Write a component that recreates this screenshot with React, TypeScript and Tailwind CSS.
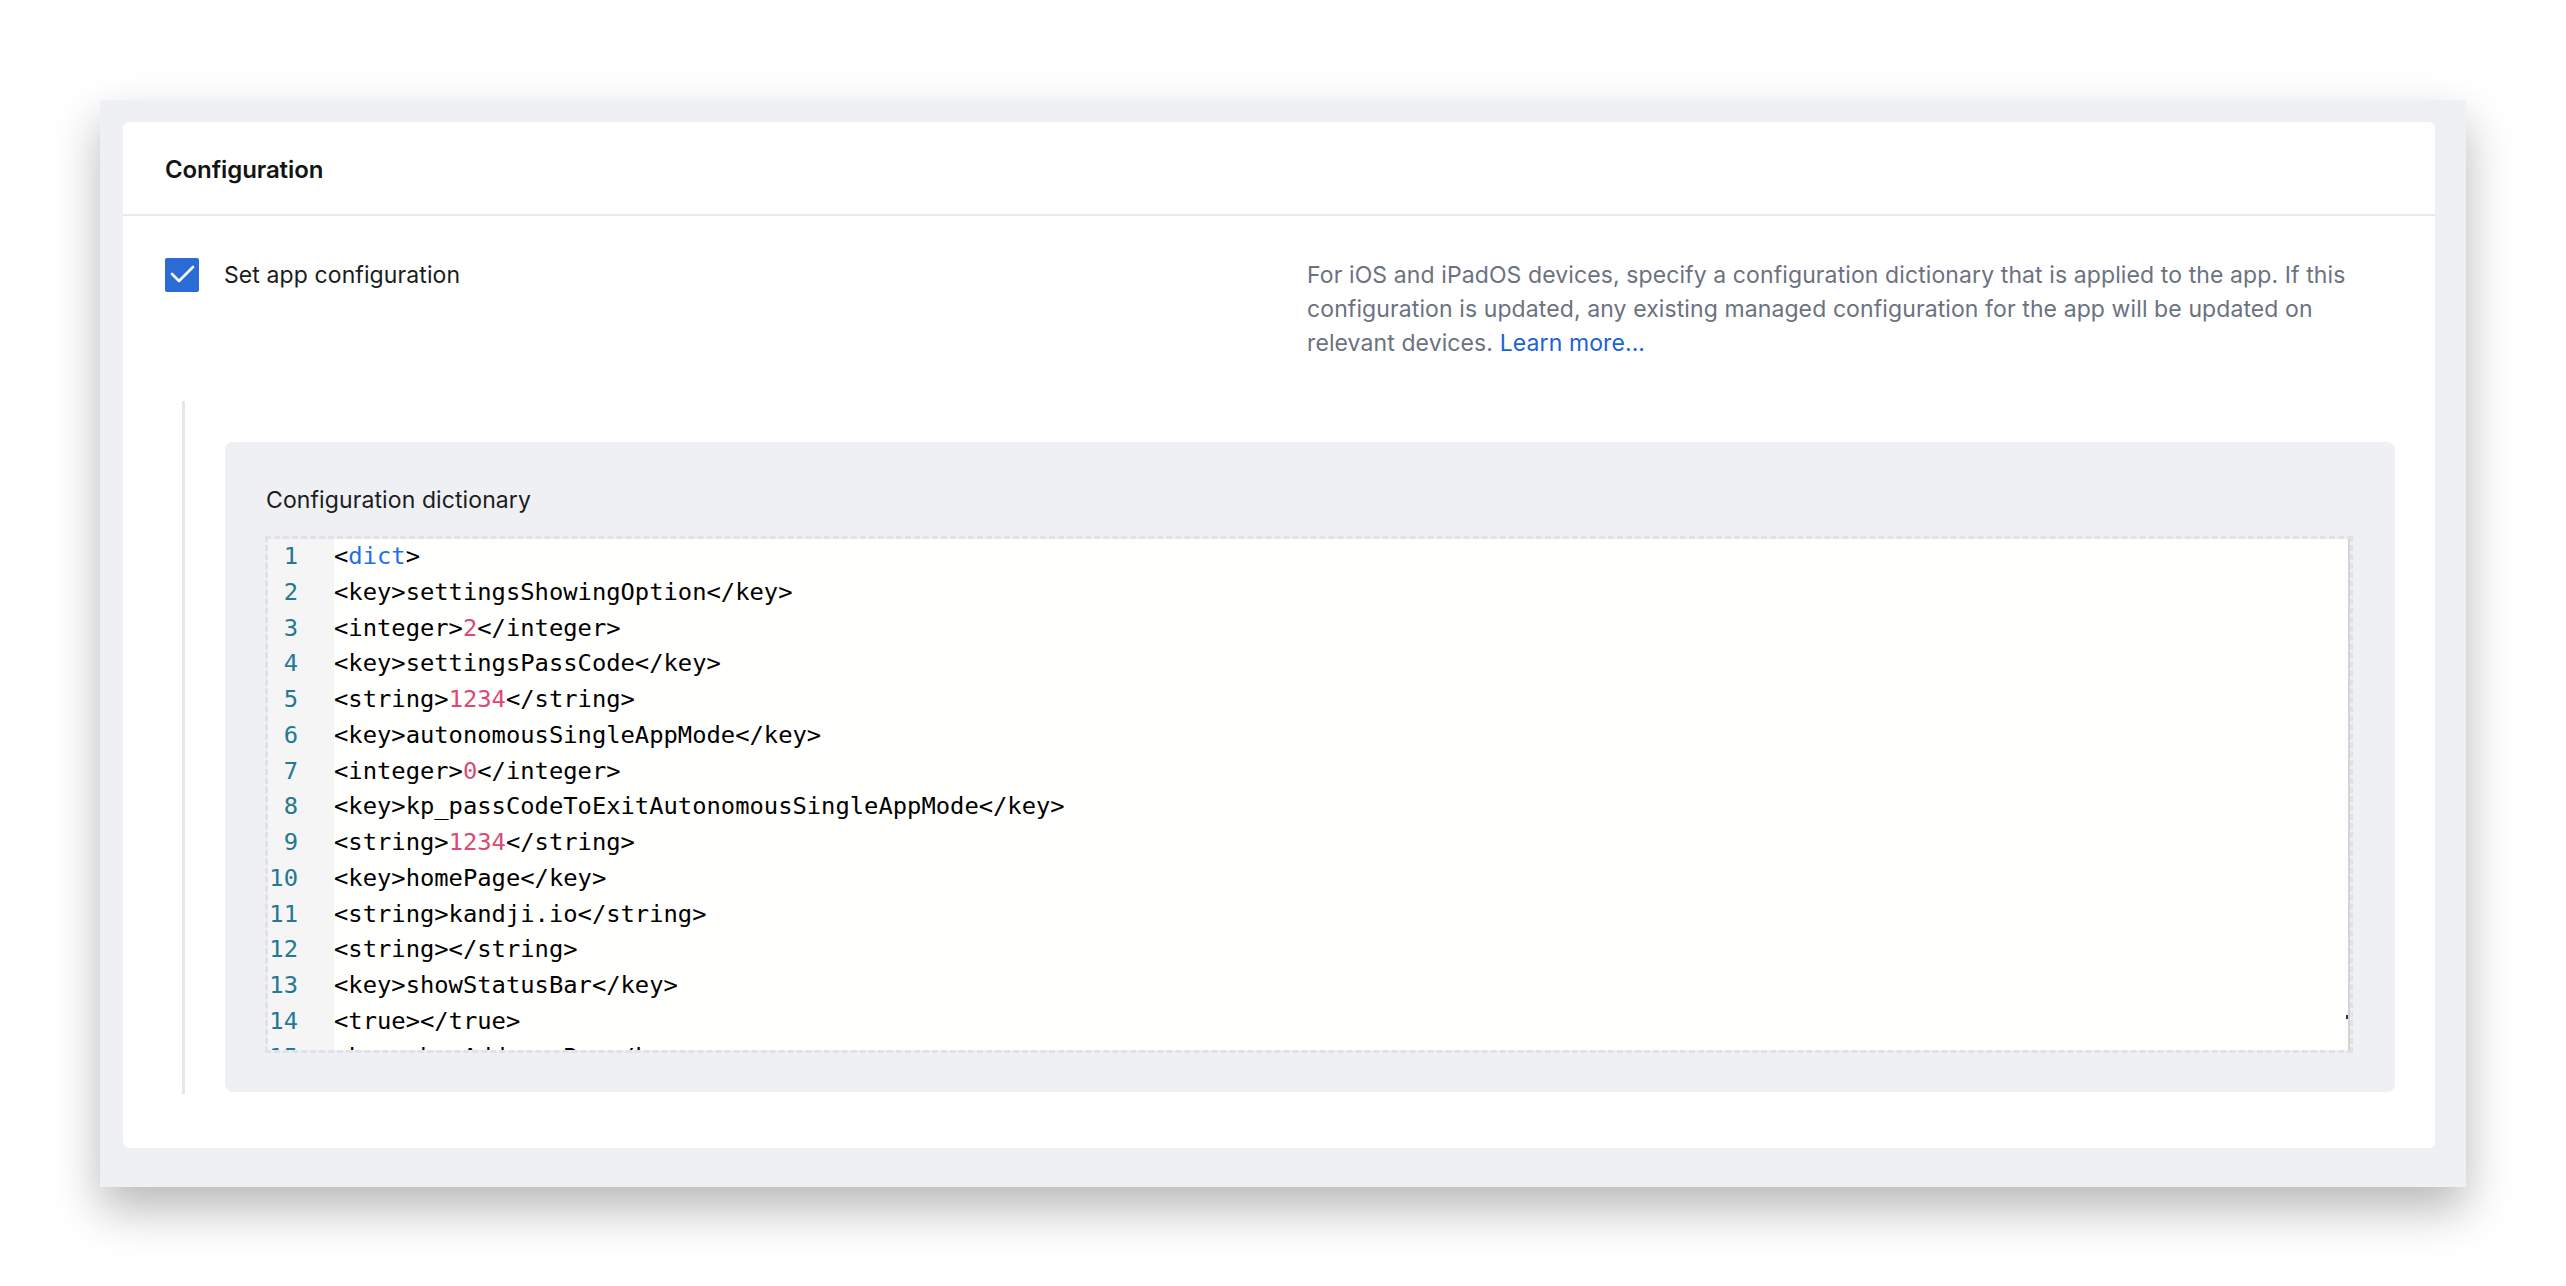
import React from "react";

const lines: React.ReactNode[] = [
  <>&lt;<span className="text-[#1f6fe6]">dict</span>&gt;</>,
  <>&lt;key&gt;settingsShowingOption&lt;/key&gt;</>,
  <>&lt;integer&gt;<span className="text-[#dc4a72]">2</span>&lt;/integer&gt;</>,
  <>&lt;key&gt;settingsPassCode&lt;/key&gt;</>,
  <>&lt;string&gt;<span className="text-[#dc4a72]">1234</span>&lt;/string&gt;</>,
  <>&lt;key&gt;autonomousSingleAppMode&lt;/key&gt;</>,
  <>&lt;integer&gt;<span className="text-[#dc4a72]">0</span>&lt;/integer&gt;</>,
  <>&lt;key&gt;kp_passCodeToExitAutonomousSingleAppMode&lt;/key&gt;</>,
  <>&lt;string&gt;<span className="text-[#dc4a72]">1234</span>&lt;/string&gt;</>,
  <>&lt;key&gt;homePage&lt;/key&gt;</>,
  <>&lt;string&gt;kandji.io&lt;/string&gt;</>,
  <>&lt;string&gt;&lt;/string&gt;</>,
  <>&lt;key&gt;showStatusBar&lt;/key&gt;</>,
  <>&lt;true&gt;&lt;/true&gt;</>,
  <>&lt;key&gt;showAddressBar&lt;/key&gt;</>,
];

export default function App() {
  return (
    <div className="min-h-[1286px] bg-white pt-[100px] px-[100px] font-['Inter',sans-serif]">
      <div className="bg-[#eef0f4] pt-[22px] pl-[23px] pr-[31px] pb-[39px] shadow-[0_22px_44px_rgba(0,0,0,0.28)]">
        <div className="bg-white rounded-[6px] pb-[54px]">
          {/* header */}
          <div className="h-[94px] flex items-center px-[42px] border-b-2 border-[#e8e9ee]">
            <h2 className="text-[24px] font-semibold text-[#141414] tracking-[-0.1px] pt-[4px]">Configuration</h2>
          </div>

          {/* body */}
          <div className="pt-[42px] px-[42px] flex items-start">
            <div className="w-[1142px] flex items-start">
              <div className="w-[34px] h-[34px] bg-[#2a6bd6] rounded-[2px] flex items-center justify-center">
                <svg width="34" height="34" viewBox="0 0 34 34">
                  <polyline points="7,16 14,23 28,9" fill="none" stroke="white" strokeWidth="2.6" strokeLinecap="round" strokeLinejoin="round" />
                </svg>
              </div>
              <span className="ml-[25px] text-[23px] tracking-[0.1px] leading-[34px] text-[#1c1c1c]">Set app configuration</span>
            </div>
            <p className="text-[23px] tracking-[0.1px] leading-[34px] text-[#6b7280]">
              <span className="block whitespace-nowrap">For iOS and iPadOS devices, specify a configuration dictionary that is applied to the app. If this</span>
              <span className="block whitespace-nowrap">configuration is updated, any existing managed configuration for the app will be updated on</span>
              <span className="block whitespace-nowrap">relevant devices. <span className="text-[#1a62d6]">Learn more...</span></span>
            </p>
          </div>

          {/* indented config block */}
          <div className="mt-[41px] ml-[59px] mr-[40px] border-l-[3px] border-[#e6e7ec] pl-[40px] pt-[41px] pb-[2px]">
            <div className="bg-[#eef0f4] rounded-[8px] pl-[40px] pr-[42px] pt-[43px] pb-[39px]">
              <div className="ml-[1px] text-[23px] tracking-[0.1px] leading-[30px] text-[#1c1c1c]">Configuration dictionary</div>
              <div className="mt-[21px] border-[3px] border-dashed border-[#e0e2e8]">
                <div className="relative h-[511px] overflow-hidden bg-[#fffffe] flex border-r-2 border-[#d4d4d4]">
                  <div className="w-[66px] bg-[#f5f5f5] font-['DejaVu_Sans_Mono',monospace] text-[23.8px] leading-[35.75px] text-[#237893] text-right pr-[36px]">
                    {lines.map((_, i) => (
                      <div key={i}>{i + 1}</div>
                    ))}
                  </div>
                  <div className="flex-1 font-['DejaVu_Sans_Mono',monospace] text-[23.8px] leading-[35.75px] text-black whitespace-pre">
                    {lines.map((l, i) => (
                      <div key={i}>{l}</div>
                    ))}
                  </div>
                  <div className="absolute right-0 top-[476px] w-[2px] h-[4px] bg-[#333]" />
                </div>
              </div>
            </div>
          </div>
        </div>
      </div>
    </div>
  );
}
